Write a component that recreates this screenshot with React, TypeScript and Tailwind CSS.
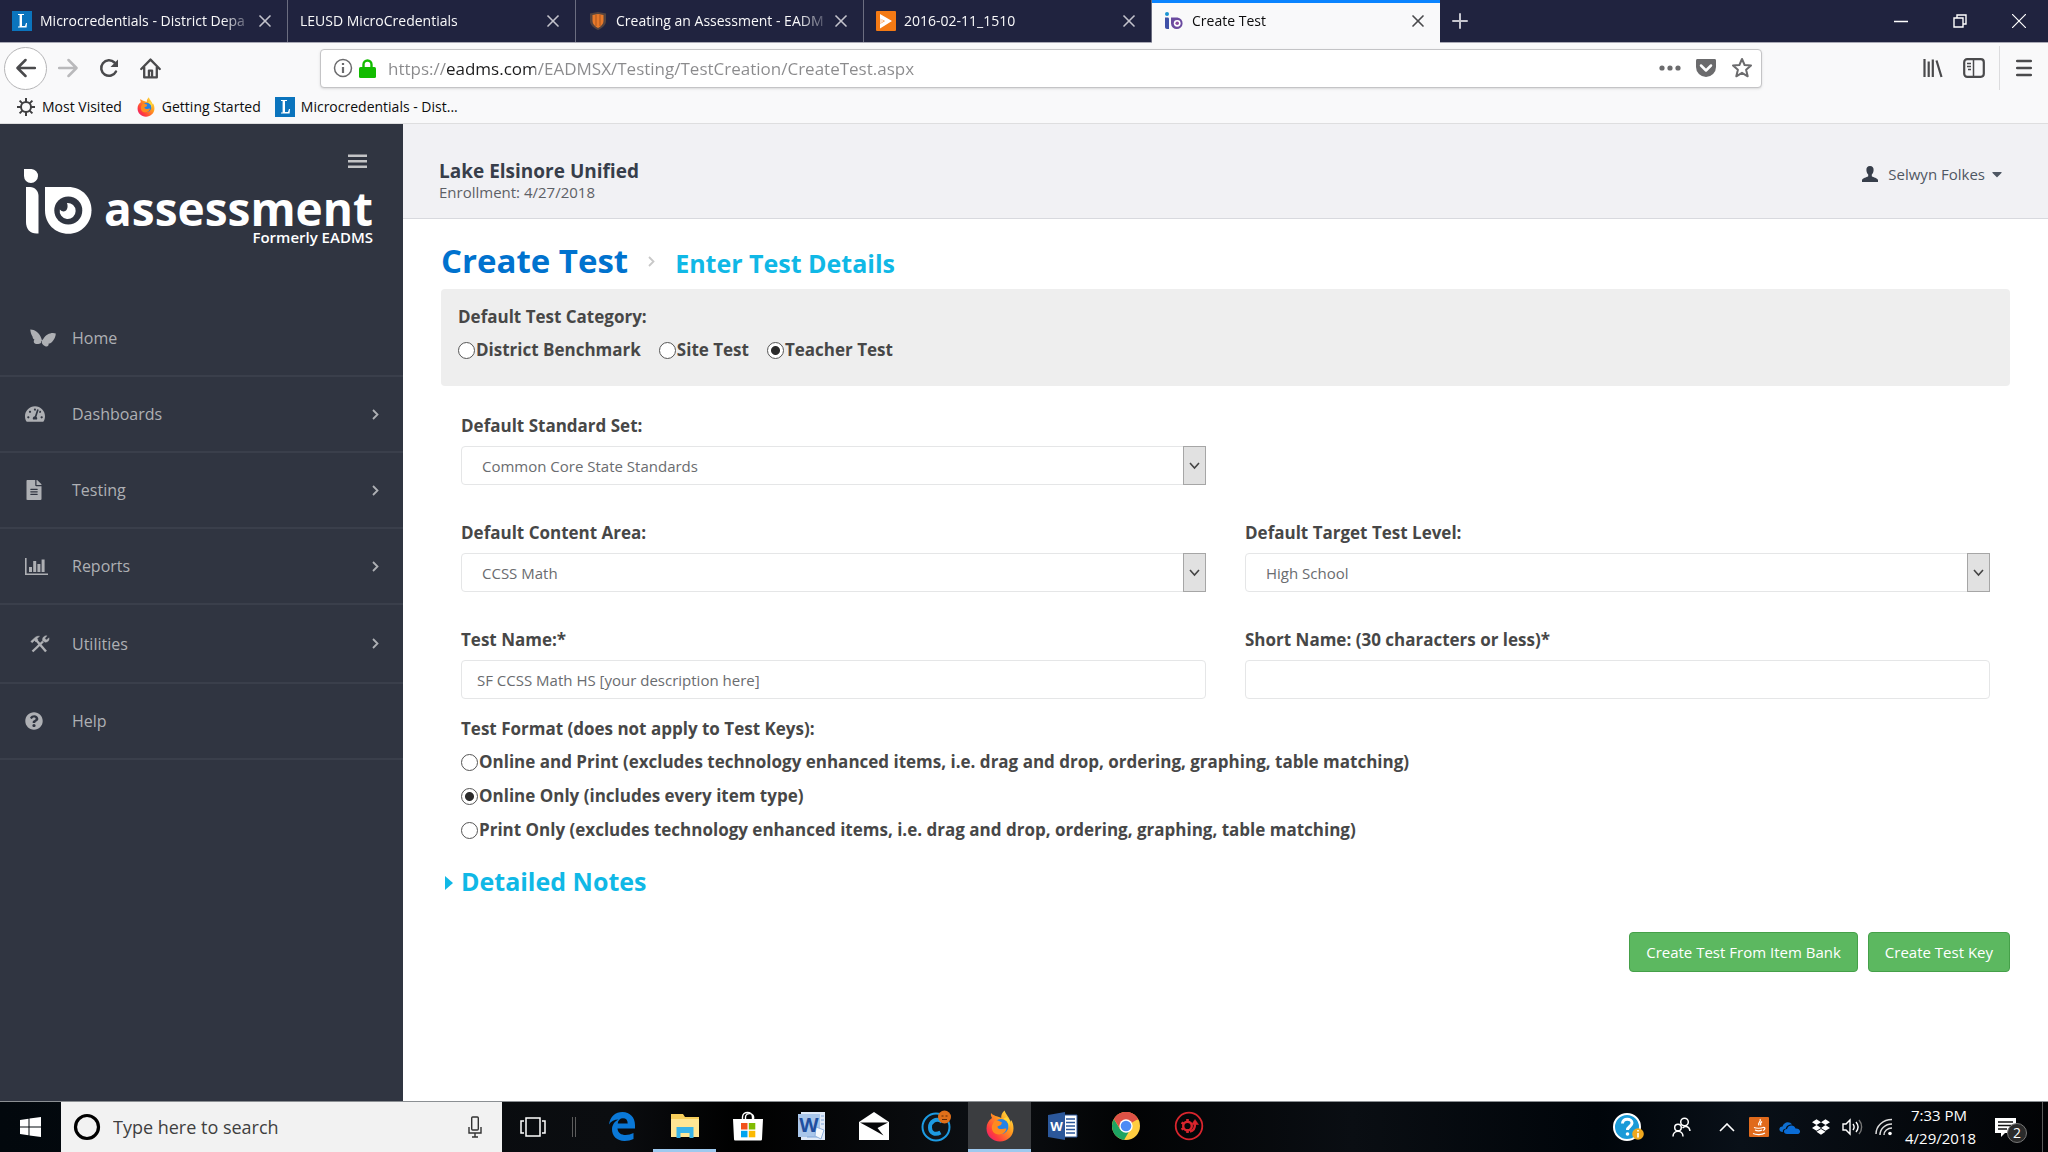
import type { ReactNode } from 'react'
import { X, Plus } from 'lucide-react'
import { FaTachometerAlt, FaFileAlt, FaQuestionCircle, FaDropbox, FaCaretDown } from 'react-icons/fa'

/* ---------- Small icons ---------- */

function LeusdIcon() {
  return (
    <svg viewBox="0 0 20 20" className="w-5 h-5 shrink-0">
      <rect width="20" height="20" fill="#0b74bd" />
      <path d="M6 3h6v1h-2v11h3l1-3h1l-.4 4.500H6v-1h1.600V4H6z" fill="#fff" />
    </svg>
  )
}

function ShieldIcon() {
  return (
    <svg viewBox="0 0 20 20" className="w-5 h-5 shrink-0">
      <path d="M2 2.500 10 1l8 1.500V10c0 4-3.500 7-8 9-4.500-2-8-5-8-9z" fill="#55443f" />
      <path d="M4.500 4 10 3l5.500 1v6c0 3-2.500 5.500-5.500 7-3-1.500-5.500-4-5.500-7z" fill="#e8792a" />
      <path d="M8 4v11M12 4v11" stroke="#a9541d" strokeWidth="1" />
    </svg>
  )
}

function PlayIcon() {
  return (
    <svg viewBox="0 0 20 20" className="w-5 h-5 shrink-0">
      <rect width="20" height="20" rx="1" fill="#f47a14" />
      <path d="M4 3 16 10 4 17.500V13l5-3-5-2.500z" fill="#fff" />
      <path d="M4 7l4 3-4 3z" fill="#fff" opacity=".75" />
    </svg>
  )
}

function IoIcon() {
  return (
    <svg viewBox="0 0 20 20" className="w-5 h-5 shrink-0">
      <circle cx="3" cy="3" r="2" fill="#1a94d2" />
      <path d="M1 6.500h2.500c1 0 1.500.6 1.500 1.500v10H3c-1.200 0-2-.8-2-2z" fill="#3f51a8" />
      <path d="M7 6.500h6.500a5.800 5.800 0 1 1-6.500 6z" fill="#6a4a9f" />
      <circle cx="13.200" cy="12.300" r="3.400" fill="#fff" />
      <circle cx="13.200" cy="12.300" r="1.800" fill="#8a4a9f" />
    </svg>
  )
}

function FirefoxIcon({ className }: { className: string }) {
  return (
    <svg viewBox="0 0 28 32" className={className}>
      <defs>
        <linearGradient id="fxBody" x1="1" y1="0" x2="0" y2="1">
          <stop offset="0" stopColor="#fff44f" />
          <stop offset=".4" stopColor="#ff9a1e" />
          <stop offset=".75" stopColor="#ff3b3f" />
          <stop offset="1" stopColor="#e0128a" />
        </linearGradient>
      </defs>
      <path d="M5 3c-.3 2 .1 3.500 1 5C2.500 10.500.5 14 .5 18.500.5 26 6.500 31.500 14 31.500S27.500 26 27.500 18.500c0-4-1-6.500-2.500-8.500-.4 1-.4 1.500-.3 2.500C23.500 7 20 5 18.500.5 16 3 15 5 15.200 8 11 6 7.500 6 5 3z" fill="url(#fxBody)" />
      <circle cx="15" cy="16.500" r="7.500" fill="#2483e6" />
      <path d="M8 11.500c1.500-1.500 3.500-1.500 5-.5l3 1.500-1 2.500-3.500 1.500c0 2 2 2.800 4.500 2.500 2-.2 3.500-1 4.500-.2-1 3.700-4 5.700-7.500 5.700-5 0-8-4-7-9z" fill="#ff8a1f" />
      <path d="M17 9c4 1 6.500 4.500 5.500 9 2-3 2-9-2-11z" fill="#ffd83a" />
    </svg>
  )
}

function GearIcon() {
  return (
    <svg viewBox="0 0 20 20" className="w-5 h-5 shrink-0" fill="none" stroke="#3f3f41">
      <circle cx="10" cy="10" r="5" strokeWidth="2" />
      <path d="M10 1v4M10 15v4M1 10h4M15 10h4M3.600 3.600l2.800 2.800M13.600 13.600l2.800 2.800M3.600 16.400l2.800-2.800M13.600 6.400l2.800-2.800" strokeWidth="2" />
    </svg>
  )
}

function ButterflyIcon() {
  return (
    <svg viewBox="0 0 26 18" className="w-[26px] h-[18px]" fill="currentColor">
      <path d="M.3.500C4 .3 9.500 3.500 11.300 9.200L12 11.500c-.6.700-1 1.300-1 2.200-1.500 1.600-4.300 1.600-5.700 1.100-1.800-.7-2-2.600-.9-4.300C3 9.800 2.600 8.600 2.500 7.500 1.300 5.500.4 3 .3.500z" />
      <path d="M25.800 4.600C22 3 16 5 13.400 9.800L12 11.500c.2.700-.2 1.500-.2 2.200.7 1.800 2 3 4 3.800 1.800.5 3-.8 2.900-2.900 1.500.1 2.500-.7 3.300-1.600 2.300-2.500 3.700-5.400 3.800-8.400z" />
    </svg>
  )
}

function BarChartIcon() {
  return (
    <svg viewBox="0 0 23 17" className="w-[23px] h-[17px]" fill="currentColor">
      <path d="M0 0h1.600v15.400H23V17H0z" />
      <path d="M4 9h3v5H4zM8.200 3h3v11h-3zM12.400 6h3v8h-3zM16.600 1.500h3V14h-3z" />
    </svg>
  )
}

function ToolsIcon() {
  return (
    <svg viewBox="0 0 20 18" className="w-5 h-[18px]" fill="none" stroke="currentColor">
      <path d="M6.500 5.500 16 16.500" strokeWidth="2.400" />
      <path d="M2.500 16.500 13 6.500" strokeWidth="2.400" />
      <path d="M.7 6.500 4.500 3C6 1.500 7.500 1 9.500 1.300L7 3.500l1 1.500-2 2-1.500-1.500-2.200 2.200z" fill="currentColor" strokeWidth=".5" />
      <path d="M17 .8 14.800 3.200l1.600 1.700 2.700-2.100c.4 2.700-1.300 4.700-3.900 4.400l-2.600-1.500C12 3 13.800.5 17 .8z" fill="currentColor" strokeWidth=".4" />
    </svg>
  )
}

function Chevron({ className }: { className: string }) {
  return (
    <svg viewBox="0 0 7 11" className={className} fill="none" stroke="currentColor" strokeWidth="1.800">
      <path d="M1 1l4.500 4.500L1 10" />
    </svg>
  )
}

/* ---------- Browser chrome ---------- */

const tabs = [
  { title: 'Microcredentials - District Depa', icon: <LeusdIcon />, active: false },
  { title: 'LEUSD MicroCredentials', icon: null, active: false },
  { title: 'Creating an Assessment - EADM', icon: <ShieldIcon />, active: false },
  { title: '2016-02-11_1510', icon: <PlayIcon />, active: false },
  { title: 'Create Test', icon: <IoIcon />, active: true },
]

function TabBar() {
  return (
    <div className="flex h-[43px] bg-[#20233f] border-b border-[#a9a9b5]">
      {tabs.map((t) => (
        <div
          key={t.title}
          className={
            t.active
              ? 'flex items-center w-72 h-[43px] px-3 pb-1 bg-[#f9f9fa] border-t-[3px] border-[#0a84ff] text-[#0c0c0d]'
              : 'flex items-center w-72 px-3 border-r border-[#6b6d80] text-[#f9f9fa]'
          }
        >
          <button className="flex flex-1 min-w-0 items-center gap-2 text-sm text-left">
            {t.icon}
            <span className="flex-1 overflow-hidden whitespace-nowrap [mask-image:linear-gradient(to_right,#000_85%,transparent)]">{t.title}</span>
          </button>
          <button aria-label="Close tab" className="w-5 flex justify-center shrink-0">
            <X className={t.active ? 'w-5 h-5 text-[#4a4a4c]' : 'w-5 h-5 text-[#c3c3cc]'} strokeWidth={2} />
          </button>
        </div>
      ))}
      <button aria-label="New tab" className="w-10 flex items-center justify-center text-[#c6c6cf]">
        <Plus className="w-6 h-6" strokeWidth={2} />
      </button>
      <div className="ml-auto flex items-center text-white">
        <button aria-label="Minimize" className="w-[59px] flex justify-center">
          <svg viewBox="0 0 14 14" className="w-3.5 h-3.5" stroke="currentColor"><path d="M0 7.500h14" strokeWidth="1.500" /></svg>
        </button>
        <button aria-label="Restore" className="w-[59px] flex justify-center">
          <svg viewBox="0 0 14 14" className="w-3.5 h-3.5" fill="none" stroke="currentColor" strokeWidth="1.400"><path d="M1 4h9v9H1zM4 4V1h9v9h-3" /></svg>
        </button>
        <button aria-label="Close" className="w-[59px] flex justify-center">
          <svg viewBox="0 0 14 14" className="w-3.5 h-3.5" stroke="currentColor" strokeWidth="1.200"><path d="M0 0l14 14M14 0L0 14" /></svg>
        </button>
      </div>
    </div>
  )
}

function NavBar() {
  return (
    <div className="flex items-center h-[50px] pl-1 bg-[#f9f9fa] text-[#4a4a4c]">
      <button aria-label="Back" className="w-[43px] h-[43px] rounded-full border border-[#b5b5b7] bg-white flex items-center justify-center">
        <svg viewBox="0 0 20 20" className="w-5 h-5" fill="none" stroke="currentColor" strokeWidth="2.500" strokeLinecap="round" strokeLinejoin="round"><path d="M19 10H2M9.500 2 1.500 10l8 8" /></svg>
      </button>
      <button aria-label="Forward" className="w-[42px] flex justify-center text-[#b9b9bb]">
        <svg viewBox="0 0 20 20" className="w-5 h-5" fill="none" stroke="currentColor" strokeWidth="2.500" strokeLinecap="round" strokeLinejoin="round"><path d="M1 10h17M10.500 2l8 8-8 8" /></svg>
      </button>
      <button aria-label="Reload" className="w-10 flex justify-center">
        <svg viewBox="0 0 20 20" className="w-5 h-5" fill="none" stroke="currentColor" strokeWidth="2.500" strokeLinecap="round"><path d="M17 13.500A7.800 7.800 0 1 1 15.500 4.500" /><path d="M19 1.500V9h-7.500z" fill="currentColor" stroke="none" /></svg>
      </button>
      <button aria-label="Home" className="w-[42px] flex justify-center">
        <svg viewBox="0 0 20 20" className="w-[21px] h-[21px]" fill="none" stroke="currentColor" strokeWidth="2.200" strokeLinecap="round" strokeLinejoin="round"><path d="M1.200 10.500 10 1.500l8.800 9M4 9v9.500h12V9" /><path d="M8.500 18v-6h3v6" /></svg>
      </button>
      <div className="flex items-center flex-1 h-[39px] ml-[149px] pl-3 pr-2 rounded-sm border border-[#c4c4c6] bg-white shadow-sm">
        <svg viewBox="0 0 20 20" className="w-5 h-5" fill="none" stroke="#6b6b6d"><circle cx="10" cy="10" r="8.500" strokeWidth="1.500" /><path d="M10 9v6M10 5v2" strokeWidth="2.200" /></svg>
        <svg viewBox="0 0 17 19" className="w-[17px] h-[19px] ml-1.5" fill="none"><path d="M4.500 9V5.500a4 4 0 0 1 8 0V9" stroke="#12bc00" strokeWidth="2.400" /><rect y="8" width="17" height="11" rx="1.500" fill="#12bc00" /></svg>
        <input
          aria-label="Address"
          defaultValue="https://eadms.com/EADMSX/Testing/TestCreation/CreateTest.aspx"
          className="flex-1 ml-3 pt-0.5 text-[17px] outline-none bg-clip-text text-transparent bg-[linear-gradient(90deg,#8a8a8c_58px,#1c1c1d_58px,#1c1c1d_147px,#8a8a8c_147px)]"
        />
        <div className="flex items-center gap-3.5">
          <button aria-label="Page actions"><svg viewBox="0 0 22 6" className="w-[22px] h-1.5" fill="#6b6b6d"><circle cx="3" cy="3" r="2.600" /><circle cx="11" cy="3" r="2.600" /><circle cx="19" cy="3" r="2.600" /></svg></button>
          <button aria-label="Save to Pocket"><svg viewBox="0 0 22 20" className="w-[22px] h-5"><path d="M2.500 1h17c1 0 1.500.6 1.500 1.500V9a10 10 0 0 1-20 0V2.500C1 1.600 1.500 1 2.500 1z" fill="#6b6b6d" /><path d="M6 7.500l5 5 5-5" fill="none" stroke="#fff" strokeWidth="2.500" strokeLinecap="round" strokeLinejoin="round" /></svg></button>
          <button aria-label="Bookmark this page"><svg viewBox="0 0 22 22" className="w-[22px] h-[22px]" fill="none" stroke="#6b6b6d" strokeWidth="2" strokeLinejoin="round"><path d="m11 2 2.600 6 6.400.5-4.900 4.200 1.600 6.600L11 15.800l-5.700 3.500 1.600-6.600L2 8.500 8.400 8z" /></svg></button>
        </div>
      </div>
      <div className="flex items-center ml-[150px]">
        <button aria-label="Library" className="w-[42px] flex justify-center"><svg viewBox="0 0 20 20" className="w-5 h-5" stroke="currentColor" strokeWidth="2.200"><path d="M1.500 1v18M5.700 3.500V19M9.800 1.500V19M13.500 2.500 18.500 19" /></svg></button>
        <button aria-label="Sidebars" className="w-10 flex justify-center"><svg viewBox="0 0 22 20" className="w-[22px] h-5" fill="none" stroke="currentColor"><rect x="1.200" y="1.200" width="19.600" height="17.600" rx="3" strokeWidth="2.200" /><path d="M10.500 2v16" strokeWidth="1.500" /><path d="M4 5.500h4M4 8.500h4M5 11.500h3" strokeWidth="1.400" /></svg></button>
        <div className="w-px h-11 ml-[5px] bg-[#dcdcde]" />
        <button aria-label="Menu" className="w-12 flex justify-center"><svg viewBox="0 0 16 18" className="w-4 h-[18px]" stroke="currentColor" strokeWidth="2.500" strokeLinecap="round"><path d="M1.200 2h13.600M1.200 9h13.600M1.200 16h13.600" /></svg></button>
      </div>
    </div>
  )
}

function Bookmarks() {
  return (
    <div className="flex items-center h-[31px] gap-3.5 pl-4 pb-0.5 bg-[#f9f9fa] border-b border-[#dededf] text-sm text-[#0c0c0d]">
      <a href="#" className="flex items-center gap-1.5"><GearIcon />Most Visited</a>
      <a href="#" className="flex items-center gap-1.5"><FirefoxIcon className="w-5 h-5" />Getting Started</a>
      <a href="#" className="flex items-center gap-1.5"><LeusdIcon />Microcredentials - Dist...</a>
    </div>
  )
}

/* ---------- Sidebar ---------- */

const navItems = [
  { label: 'Home', icon: <ButterflyIcon />, row: 'h-[76px]', pad: 'pl-[30px]', arrow: false },
  { label: 'Dashboards', icon: <FaTachometerAlt className="w-5 h-5" />, row: 'h-[76px]', pad: 'pl-[25px]', arrow: true },
  { label: 'Testing', icon: <FaFileAlt className="w-[18px] h-5" />, row: 'h-[76px]', pad: 'pl-[25px]', arrow: true },
  { label: 'Reports', icon: <BarChartIcon />, row: 'h-[76px]', pad: 'pl-[25px]', arrow: true },
  { label: 'Utilities', icon: <ToolsIcon />, row: 'h-[79px]', pad: 'pl-[30px]', arrow: true },
  { label: 'Help', icon: <FaQuestionCircle className="w-[18px] h-[18px]" />, row: 'h-[76px]', pad: 'pl-[25px]', arrow: false },
]

function Sidebar() {
  return (
    <aside className="w-[403px] shrink-0 bg-[#303541] text-[#aeb0b4]">
      <div className="flex justify-end pt-[30px] pr-9">
        <button aria-label="Toggle menu">
          <svg viewBox="0 0 19 15" className="w-[19px] h-[15px]" stroke="#c3c4c6" strokeWidth="2.400"><path d="M0 1.800h19M0 7.300h19M0 12.800h19" /></svg>
        </button>
      </div>
      <div className="flex pl-6 text-white">
        <svg viewBox="0 0 68 66" className="w-[68px] h-[66px]" fill="#fff">
          <path d="M0 0h7.500A7 7 0 1 1 0 7z" />
          <path d="M2 18h4c5 0 8.500 4 8.500 9v37.500h-2C6 64.500 2 60 2 53z" />
          <path d="M21 18h23c14 0 23.500 10.500 23.500 23.300S57.500 64.800 44.300 64.800 21 55 21 41.300z" />
          <circle cx="44.300" cy="41.500" r="14" fill="#303541" />
          <path d="M43 34a8 8 0 1 1-7.200 6.500c2 2.500 5.500 2.500 6.700.5 1.200-1.800 1.500-4 .5-7z" />
        </svg>
        <div className="ml-3 pt-[18px] text-right">
          <div className="text-[46px] leading-[42px] font-bold">assessment</div>
          <div className="text-[15px] leading-4 font-semibold">Formerly EADMS</div>
        </div>
      </div>
      <nav className="pt-14">
        {navItems.map((n) => (
          <a key={n.label} href="#" className={`flex items-center border-b-2 border-[#3a3f4b] text-base ${n.row}`}>
            <span className={`w-[72px] shrink-0 ${n.pad}`}>{n.icon}</span>
            <span className="flex-1">{n.label}</span>
            {n.arrow && <Chevron className="w-[7px] h-[11px] mr-6" />}
          </a>
        ))}
      </nav>
    </aside>
  )
}

/* ---------- Form controls ---------- */

function Radio({ name, label, checked }: { name: string; label: string; checked?: boolean }) {
  return (
    <label className="flex items-center gap-px">
      <input
        type="radio"
        name={name}
        defaultChecked={checked}
        className="appearance-none w-[17px] h-[17px] rounded-full border border-[#555] bg-white checked:bg-[radial-gradient(circle,#2b2b2b_4px,#fff_5px)]"
      />
      {label}
    </label>
  )
}

function SelectField({ id, label, value }: { id: string; label: string; value: string }) {
  return (
    <div>
      <label htmlFor={id} className="block mb-2">{label}</label>
      <div className="relative">
        <select id={id} className="appearance-none block w-full h-[39px] px-5 rounded border border-[#e5e6e7] bg-white text-[#6a6c6f] font-normal text-[15px]">
          <option>{value}</option>
        </select>
        <span className="absolute right-0 inset-y-0 w-[23px] flex items-center justify-center border border-[#a6a6a6] bg-[#e1e1e1] pointer-events-none">
          <svg viewBox="0 0 11 8" className="w-[11px] h-2" fill="none" stroke="#444" strokeWidth="1.600"><path d="M1 1l4.500 5L10 1" /></svg>
        </span>
      </div>
    </div>
  )
}

function TextField({ id, label, value }: { id: string; label: string; value: string }) {
  return (
    <div>
      <label htmlFor={id} className="block mb-2">{label}</label>
      <input id={id} defaultValue={value} className="block w-full h-[39px] px-[15px] rounded border border-[#e5e6e7] bg-white text-[#6a6c6f] font-normal text-[15px]" />
    </div>
  )
}

function PageHeader() {
  return (
    <header className="flex items-start justify-between h-[95px] pt-9 pl-9 pr-[43px] bg-[#f1f1f4] border-b border-[#d8d9de]">
      <div>
        <div className="text-[19px] leading-[22px] font-bold text-[#373e4a]">Lake Elsinore Unified</div>
        <div className="text-[15px] leading-5 text-[#5d6066]">Enrollment: 4/27/2018</div>
      </div>
      <button className="flex items-center h-7 text-[15px] text-[#4f5763]">
        <svg viewBox="0 0 16 16" className="w-4 h-4 mr-2.5" fill="#373e4a"><path d="M8 0c2.600 0 3.800 1.800 3.600 4.200-.1 1.800-.8 3.300-1.800 4.300v1.700c1.700 1.300 5.400 1.600 6.200 3.800V16H0v-2c.8-2.200 4.500-2.500 6.200-3.800V8.500c-1-1-1.700-2.500-1.800-4.300C4.200 1.800 5.400 0 8 0z" /></svg>
        Selwyn Folkes
        <FaCaretDown className="w-4 h-4 ml-1" />
      </button>
    </header>
  )
}

function CreateTestForm() {
  return (
    <form className="px-[38px] pt-[17px] pb-10 text-[17px] leading-6 font-bold text-[#474747]">
      <h1 className="flex items-center h-[50px] mb-[3px]">
        <span className="text-[33px] leading-[44px] text-[#0072ce]">Create Test</span>
        <Chevron className="w-[7px] h-[11px] mx-5 text-[#c8c8c8]" />
        <span className="text-[25px] pt-1 text-[#10b8e6]">Enter Test Details</span>
      </h1>

      <fieldset className="h-[97px] px-[17px] pt-4 rounded bg-[#eee]">
        <div>Default Test Category:</div>
        <div className="flex gap-[18px] mt-[9px]">
          <Radio name="category" label="District Benchmark" />
          <Radio name="category" label="Site Test" />
          <Radio name="category" label="Teacher Test" checked />
        </div>
      </fieldset>

      <div className="grid grid-cols-2 gap-x-[39px] gap-y-9 px-5 pt-7">
        <SelectField id="standard" label="Default Standard Set:" value="Common Core State Standards" />
        <div />
        <SelectField id="content" label="Default Content Area:" value="CCSS Math" />
        <SelectField id="level" label="Default Target Test Level:" value="High School" />
        <TextField id="testName" label="Test Name:*" value="SF CCSS Math HS [your description here]" />
        <TextField id="shortName" label="Short Name: (30 characters or less)*" value="" />
      </div>

      <fieldset className="px-5 pt-[18px]">
        <div>Test Format (does not apply to Test Keys):</div>
        <div className="flex flex-col gap-2.5 mt-[9px]">
          <Radio name="format" label="Online and Print (excludes technology enhanced items, i.e. drag and drop, ordering, graphing, table matching)" />
          <Radio name="format" label="Online Only (includes every item type)" checked />
          <Radio name="format" label="Print Only (excludes technology enhanced items, i.e. drag and drop, ordering, graphing, table matching)" />
        </div>
      </fieldset>

      <button type="button" className="flex items-center gap-2 mt-5 pl-1 text-[25px] leading-[38px] text-[#10b8e6]">
        <svg viewBox="0 0 8 14" className="w-2 h-3.5 mt-1" fill="currentColor"><path d="M0 0l8 7-8 7z" /></svg>
        Detailed Notes
      </button>

      <div className="flex justify-end gap-2.5 mt-8 text-[15px] font-normal text-white">
        <button type="button" className="h-10 px-4 rounded-sm border border-[#45a049] bg-[#5cb860]">Create Test From Item Bank</button>
        <button type="button" className="h-10 px-4 rounded-sm border border-[#45a049] bg-[#5cb860]">Create Test Key</button>
      </div>
    </form>
  )
}

/* ---------- Windows taskbar ---------- */

function TaskButton({ label, children, open, active }: { label: string; children: ReactNode; open?: boolean; active?: boolean }) {
  return (
    <button
      aria-label={label}
      className={`flex items-center justify-center w-[63px] h-full border-b-[3px] ${active ? 'bg-[#3b3d40]' : ''} ${open || active ? 'border-[#9fc9ef]' : 'border-transparent'}`}
    >
      {children}
    </button>
  )
}

function Taskbar() {
  return (
    <footer className="flex items-center h-[51px] border-t border-[#8b8f93] bg-[linear-gradient(90deg,#02080d,#0b0d10_30%,#000_36%,#0c0f13_48%,#020304_55%,#0a0e13_66%,#00050a_78%,#091018_85%,#020305)] text-white">
      <button aria-label="Start" className="w-[61px] flex justify-center">
        <svg viewBox="0 0 21 20" className="w-[21px] h-5" fill="#fff"><path d="M0 3l8.500-1.200v7.700H0zM9.500 1.600 21 0v9.500H9.500zM0 10.500h8.500v7.700L0 17zM9.500 10.500H21V20L9.500 18.400z" /></svg>
      </button>
      <div className="flex items-center w-[441px] h-full px-3 bg-[#f2f2f2]">
        <svg viewBox="0 0 28 28" className="w-7 h-7" fill="none"><circle cx="14" cy="14" r="11.500" stroke="#000" strokeWidth="3.200" /></svg>
        <input aria-label="Search" placeholder="Type here to search" className="flex-1 ml-3 text-lg outline-none placeholder:text-[#3f3f3f]" />
        <svg viewBox="0 0 14 22" className="w-3.5 h-[22px] mr-2" fill="none" stroke="#333" strokeWidth="1.400"><rect x="3.700" y="1" width="6.600" height="13" rx="1" /><path d="M1 11v6h12v-6M7 17v4M4 21h6" /></svg>
      </div>
      <button aria-label="Task view" className="w-[62px] flex justify-center">
        <svg viewBox="0 0 26 20" className="w-[26px] h-5" fill="none" stroke="#fff" strokeWidth="1.500"><rect x="6" y="1" width="14" height="18" /><path d="M4 4H1v12h3M22 4h3v12h-3" /></svg>
      </button>
      <div className="w-1 h-5 ml-2 mr-3.5 border-x border-[#5c5c5c]" />

      <TaskButton label="Edge">
        <svg viewBox="0 0 28 30" className="w-7 h-[30px]" fill="#0a78d7"><path d="M1 13.500C2 5.500 7.500 1 14.500 1 22 1 27 6.500 27 14v3.500H9.500c.3 4.500 4 6.500 8 6.500 3 0 5.500-.7 8-2v6c-2.500 1.300-5.700 2-9 2C9 30 4 25 4 18.500c0-4.500 2.500-8 6.500-10C6.500 8.500 3 10 1 13.500zM9.700 12.500h10c0-3.500-1.700-5.300-4.700-5.300s-4.900 2-5.300 5.300z" /></svg>
      </TaskButton>
      <TaskButton label="File Explorer" open>
        <svg viewBox="0 0 28 24" className="w-7 h-6"><path d="M0 0h12l2 3h14v19H0z" fill="#f7ce5b" /><path d="M0 5h28v18H0z" fill="#ffe694" /><path d="M5.500 13h17v11h-4v-5h-9v5h-4z" fill="#38b3e8" /></svg>
      </TaskButton>
      <TaskButton label="Microsoft Store">
        <svg viewBox="0 0 30 30" className="w-[30px] h-[30px]"><path d="M9.500 9V6c0-6 10-6 10 0v3M12.500 9V6c0-5 10-5 8 3" fill="none" stroke="#fff" strokeWidth="1.400" /><path d="M0 8h30l-1 20c0 1-.6 1.500-1.500 1.500h-25C1.600 29.500 1 29 1 28z" fill="#fff" /><path d="M8 12h6.500v6.500H8z" fill="#f1511b" /><path d="M15.800 12h6.500v6.500h-6.500z" fill="#80bb01" /><path d="M8 19.800h6.500v6.500H8z" fill="#00a4ef" /><path d="M15.800 19.800h6.500v6.500h-6.500z" fill="#fbb901" /></svg>
      </TaskButton>
      <TaskButton label="Word 2010">
        <svg viewBox="0 0 28 28" className="w-7 h-7"><path d="M4 0h24v28H4z" fill="#dfe9f7" /><path d="M1 2h22v23H1z" fill="#a9c6ea" /><path d="M24 4h3M24 8h3M24 12h3M10 25h14" stroke="#7fa5d8" /><path d="m19 15 8 3-3 9-6-3z" fill="#f4f8fd" stroke="#8fb0dc" /><text x="12" y="20" textAnchor="middle" fontSize="20" fontWeight="bold" fill="#1f4fa0" fontFamily="Open Sans, sans-serif">W</text></svg>
      </TaskButton>
      <TaskButton label="Mail">
        <svg viewBox="0 0 30 28" className="w-[30px] h-7"><path d="M0 10 15 0l15 10v18H0z" fill="#fff" /><path d="M1 10.500h28L18.500 16l6 7.500L13 17z" fill="#050608" /></svg>
      </TaskButton>
      <TaskButton label="Ccleaner">
        <svg viewBox="0 0 32 32" className="w-8 h-8"><circle cx="15" cy="17" r="13.500" fill="#101418" stroke="#1d9be3" strokeWidth="2" /><path d="M21 11.500c-6-4-12 0-12 6 0 5.500 5 8 10.500 5" fill="none" stroke="#1d9be3" strokeWidth="4" /><circle cx="23.500" cy="7" r="6.500" fill="#e0701a" /><path d="M20.500 6h2M24.500 6h2M21 9.500h5" stroke="#5f2a08" strokeWidth="1.200" /></svg>
      </TaskButton>
      <TaskButton label="Firefox" active><FirefoxIcon className="w-7 h-8" /></TaskButton>
      <TaskButton label="Word">
        <svg viewBox="0 0 30 28" className="w-[30px] h-7"><path d="M15 3h14v22H15z" fill="#fff" stroke="#2b579a" strokeWidth="1" /><path d="M18 7h9M18 10.500h9M18 14h9M18 17.500h9M18 21h9" stroke="#2b579a" strokeWidth="1.500" /><path d="M0 3 17 0v28L0 25z" fill="#2b579a" /><text x="8.500" y="19" textAnchor="middle" fontSize="13" fontWeight="bold" fill="#fff" fontFamily="Open Sans, sans-serif">W</text></svg>
      </TaskButton>
      <TaskButton label="Chrome">
        <svg viewBox="0 0 30 30" className="w-[30px] h-[30px]"><circle cx="15" cy="15" r="14" fill="#ffcd40" /><path d="M15 15 2.900 8A14 14 0 0 1 27.100 8z" fill="#de5246" /><path d="M2.900 8A14 14 0 0 0 13 28.900L19.500 18 9 18z" fill="#1da462" /><path d="M15 8.500h12.400A14 14 0 0 0 2.900 8L9.300 18z" fill="#de5246" /><circle cx="15" cy="15" r="6.700" fill="#fff" /><circle cx="15" cy="15" r="5.300" fill="#4c8bf5" /></svg>
      </TaskButton>
      <TaskButton label="Driver Booster">
        <svg viewBox="0 0 30 30" className="w-[30px] h-[30px]" fill="none" stroke="#d9252d"><circle cx="15" cy="15" r="13.300" strokeWidth="1.800" /><circle cx="13.500" cy="15" r="4.300" strokeWidth="2.400" /><path d="M13.500 8v3M13.500 19v3M7.500 11.500 10 13M7.500 18.500 10 17" strokeWidth="2.600" /><path d="M16 20.500c3.500-.5 5-3 5-7.500" strokeWidth="2.400" /><path d="M17.500 13.500 21 8.500l3.500 5z" fill="#d9252d" strokeWidth=".5" /></svg>
      </TaskButton>

      <div className="ml-auto flex items-center h-full">
        <svg viewBox="0 0 31 28" className="w-[31px] h-7"><circle cx="14" cy="14" r="13" fill="#1b9bd8" stroke="#fff" strokeWidth="2" /><path d="M9.500 10.500c0-6 9.500-5.500 9.500-.5 0 3.500-4.500 3.500-4.500 7" fill="none" stroke="#fff" strokeWidth="3" /><circle cx="14.500" cy="21" r="1.800" fill="#fff" /><circle cx="25" cy="21" r="5.800" fill="#f0a81e" /><path d="M25 20v4.500M25 17v1.500" stroke="#fff" strokeWidth="1.600" /></svg>
        <svg viewBox="0 0 19 20" className="w-[19px] h-5 ml-7" fill="none" stroke="#fff" strokeWidth="1.500"><circle cx="12.500" cy="5" r="3.800" /><circle cx="6" cy="10.500" r="3.300" /><path d="M1 19.500c0-7 10-7 10 0M10.500 11c3-3 7-1.500 7.500 3" /></svg>
        <svg viewBox="0 0 16 9" className="w-4 h-[9px] ml-7" fill="none" stroke="#fff" strokeWidth="1.600"><path d="M1 8l7-7 7 7" /></svg>
        <svg viewBox="0 0 20 20" className="w-5 h-5 ml-3.5"><rect width="20" height="20" rx="1" fill="#e06a1c" /><path d="M11 2c2 2.500-3 3.500-1 6.500M13 4.500c-2 1.500-2 2.500-1 4M5 10.500c2 1 7 1 9 0M6 13c2 1 5 1 7 0M4 16.500c3 1.500 9 1.500 12-.5M14 10.500c2.500-.5 2.500 2 0 3" fill="none" stroke="#fff" strokeWidth="1.200" /></svg>
        <svg viewBox="0 0 21 13" className="w-[21px] h-[13px] ml-2.5"><path d="M4 11C-1 11-.5 5.500 3.500 5.500 4.500 1 10.500-.5 13 3.500c-4 0-6 2-6 4-3 .5-3.500 2-3 3.500z" fill="#0f6fd0" /><path d="M8 13c-4 0-4-5 0-5 1-4.500 7.500-4.500 8.500-.5 5.500-.5 6 5.500 1.500 5.500z" fill="#0a6cd6" /></svg>
        <FaDropbox className="w-[18px] h-[18px] ml-3" />
        <svg viewBox="0 0 21 18" className="w-[21px] h-[18px] ml-3" fill="none" stroke="#fff" strokeWidth="1.400"><path d="M1 6h3l4-4v14l-4-4H1zM11 6c1.500 2 1.500 4 0 6M14 4c2.500 3 2.500 7 0 10" /><path d="M17 2c3.500 4 3.500 10 0 14" stroke="#777" /></svg>
        <svg viewBox="0 0 18 18" className="w-[18px] h-[18px] ml-3" fill="none" stroke="#ddd" strokeWidth="1.500"><path d="M1 16C1 8 8 1.500 17 1.500M5 17c0-6 5-11 12-11M9 17c0-4 3.500-7 8-7" /><circle cx="15" cy="15.500" r="1.800" fill="#fff" stroke="none" /></svg>
        <div className="w-[68px] ml-3 text-center text-[15px] leading-[23px] whitespace-nowrap">
          <div>7:33 PM</div>
          <div>4/29/2018</div>
        </div>
        <button aria-label="Notifications" className="relative ml-[22px] w-8 h-8">
          <svg viewBox="0 0 21 19" className="w-[21px] h-[19px]"><path d="M0 0h21v15H10l-4 4v-4H0z" fill="#fff" /><path d="M3 4h15M3 7.500h15M3 11h9" stroke="#111" strokeWidth="1.500" /></svg>
          <span className="absolute right-0 bottom-0 w-5 h-5 rounded-full border border-[#777] bg-[#2b2b2b] text-sm leading-[18px] text-center">2</span>
        </button>
        <div className="w-px h-full ml-[15px] mr-[5px] bg-[#5a5a5a]" />
      </div>
    </footer>
  )
}

export default function App() {
  return (
    <div className="min-h-screen flex flex-col bg-white font-['Open_Sans','Noto_Sans',sans-serif]">
      <TabBar />
      <NavBar />
      <Bookmarks />
      <div className="flex flex-1">
        <Sidebar />
        <main className="flex-1 min-w-0">
          <PageHeader />
          <CreateTestForm />
        </main>
      </div>
      <Taskbar />
    </div>
  )
}
